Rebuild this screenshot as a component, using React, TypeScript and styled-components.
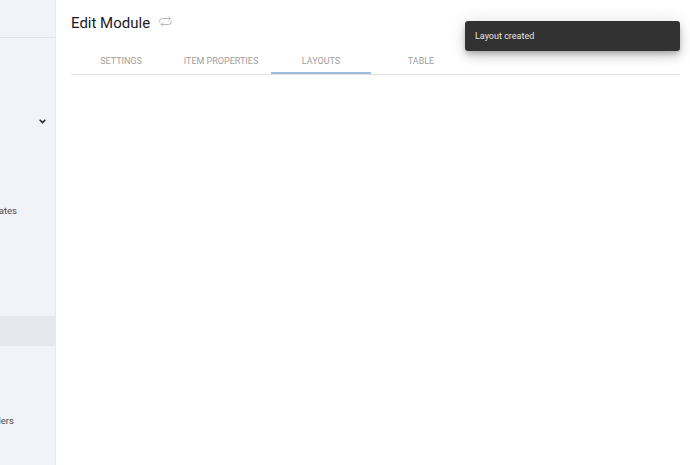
import React from "react";
import styled, { createGlobalStyle } from "styled-components";

const Global = createGlobalStyle`
  html, body { margin: 0; padding: 0; background: #fff; }
  body { font-family: Roboto, "Liberation Sans", sans-serif; overflow: hidden; }
`;

const Page = styled.div`
  position: relative;
  display: flex;
  width: 690px;
  height: 465px;
  overflow: hidden;
`;

const Sidebar = styled.aside`
  flex: 0 0 55px;
  display: flex;
  flex-direction: column;
  background: #f2f3f9;
  border-right: 1px solid #e8e9ef;
  overflow: hidden;
`;

const SidebarHeader = styled.div`
  flex: 0 0 37px;
  border-bottom: 1px solid #e4e5ea;
`;

const SideNav = styled.nav`
  display: flex;
  flex-direction: column;
  padding-top: 68px;
`;

const NavRow = styled.div<{ $active?: boolean; $trail?: number }>`
  height: 30px;
  box-sizing: border-box;
  padding-bottom: 1px;
  display: flex;
  align-items: center;
  justify-content: flex-end;
  padding-right: ${(p) => p.$trail ?? 0}px;
  background: ${(p) => (p.$active ? "#e7e8ed" : "transparent")};
  color: #4a4a4a;
  font-size: 9.5px;
  white-space: nowrap;
`;

const ChevronMark = styled.svg`
  margin-top: 2px;
`;

const Main = styled.main`
  flex: 1;
  min-width: 0;
  padding: 0 10px 0 15px;
  display: flex;
  flex-direction: column;
`;

const TitleRow = styled.div`
  height: 45px;
  display: flex;
  align-items: center;
  gap: 9px;
`;

const Title = styled.h1`
  margin: 0;
  font-size: 15px;
  font-weight: 400;
  color: #1b1b24;
`;

const Tabs = styled.div`
  display: flex;
  height: 29px;
  border-bottom: 1px solid #e2e2e2;
`;

const Tab = styled.div<{ $active?: boolean }>`
  width: 100px;
  height: 29px;
  display: flex;
  align-items: center;
  justify-content: center;
  box-sizing: border-box;
  padding-top: 4px;
  font-size: 9px;
  text-transform: uppercase;
  color: #a0a0a0;
  border-bottom: 2px solid ${(p) => (p.$active ? "#a0bbdc" : "transparent")};
`;

const Toast = styled.div`
  position: absolute;
  top: 21px;
  left: 465px;
  width: 215px;
  height: 30px;
  box-sizing: border-box;
  padding: 0 0 1px 10px;
  display: flex;
  align-items: center;
  background: #323232;
  border-radius: 3px;
  box-shadow: 0 3px 5px -1px rgba(0,0,0,.2), 0 6px 10px 0 rgba(0,0,0,.14), 0 1px 18px 0 rgba(0,0,0,.12);
  color: #e4e4e4;
  font-size: 9px;
`;

const RepeatIcon = () => (
  <svg width="13" height="13" viewBox="0 0 13 13" fill="none" stroke="#b4b8b8" strokeWidth="1">
    <path d="M.5 6.5V5.5Q.5 2.5 3.5 2.5H11.5" />
    <path d="M9.5 .5L11.5 2.5L9.5 4.5" />
    <path d="M12.5 4.5V5.5Q12.5 8.5 9.5 8.5H2" />
    <path d="M4 6.5L2 8.5L4 10.5" />
  </svg>
);

const Chevron = () => (
  <ChevronMark width="7" height="5" viewBox="0 0 7 5" fill="none" stroke="#222" strokeWidth="1.5">
    <path d="M.7 .8L3.5 3.6L6.3 .8" />
  </ChevronMark>
);

export default function App() {
  return (
    <Page>
      <Global />
      <Sidebar>
        <SidebarHeader />
        <SideNav>
          <NavRow $trail={9}><Chevron /></NavRow>
          <NavRow />
          <NavRow />
          <NavRow $trail={38}>Templates</NavRow>
          <NavRow />
          <NavRow />
          <NavRow />
          <NavRow $active />
          <NavRow />
          <NavRow />
          <NavRow $trail={41}>Handlers</NavRow>
        </SideNav>
      </Sidebar>
      <Main>
        <TitleRow>
          <Title>Edit Module</Title>
          <RepeatIcon />
        </TitleRow>
        <Tabs>
          <Tab>Settings</Tab>
          <Tab>Item Properties</Tab>
          <Tab $active>Layouts</Tab>
          <Tab>Table</Tab>
        </Tabs>
      </Main>
      <Toast>Layout created</Toast>
    </Page>
  );
}
